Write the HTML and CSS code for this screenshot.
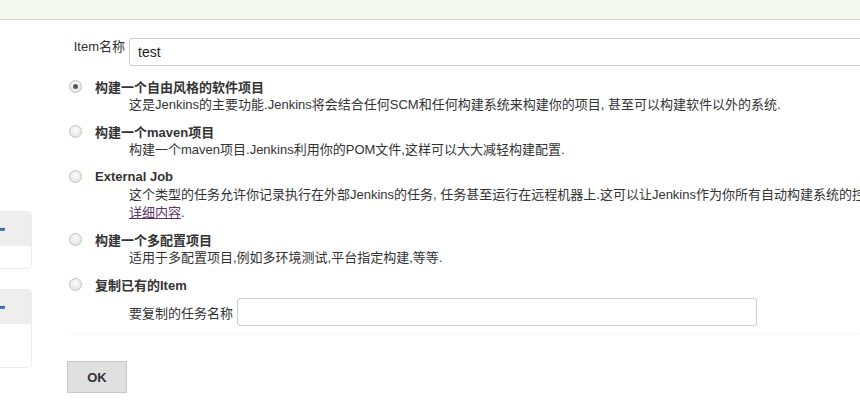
FILE: index.html
```html
<!DOCTYPE html>
<html lang="zh-CN">
<head>
    <meta charset="UTF-8">
    <meta name="viewport" content="width=device-width, initial-scale=1.0">
    <title>新建Item</title>
    <link rel="stylesheet" href="styles.css">
</head>
<body>
    <div class="topbar"></div>
    <div class="page">
        <div class="sidebar">
            <div class="side-panel first">
                <div class="side-head"><span class="side-icon"></span></div>
                <div class="side-body short"></div>
            </div>
            <div class="side-panel">
                <div class="side-head"><span class="side-icon"></span></div>
                <div class="side-body"></div>
            </div>
        </div>
        <form class="main" id="createItem">
            <div class="name-row">
                <label for="name">Item名称</label>
                <input type="text" id="name" name="name" value="test">
            </div>

            <div class="mode-list">
                <div class="mode">
                    <div class="mode-label"><span class="radio checked"></span>构建一个自由风格的软件项目</div>
                    <div class="mode-desc">这是Jenkins的主要功能.Jenkins将会结合任何SCM和任何构建系统来构建你的项目, 甚至可以构建软件以外的系统.</div>
                </div>
                <div class="mode">
                    <div class="mode-label"><span class="radio"></span>构建一个maven项目</div>
                    <div class="mode-desc">构建一个maven项目.Jenkins利用你的POM文件,这样可以大大减轻构建配置.</div>
                </div>
                <div class="mode">
                    <div class="mode-label"><span class="radio"></span>External Job</div>
                    <div class="mode-desc clip">这个类型的任务允许你记录执行在外部Jenkins的任务, 任务甚至运行在远程机器上.这可以让Jenkins作为你所有自动构建系统的控制面板.</div>
                    <div class="mode-desc"><a href="#">详细内容</a>.</div>
                </div>
                <div class="mode">
                    <div class="mode-label"><span class="radio"></span>构建一个多配置项目</div>
                    <div class="mode-desc">适用于多配置项目,例如多环境测试,平台指定构建,等等.</div>
                </div>
                <div class="mode">
                    <div class="mode-label"><span class="radio"></span>复制已有的Item</div>
                    <div class="copy-row">
                        <label for="from">要复制的任务名称</label>
                        <input type="text" id="from" name="from">
                    </div>
                </div>
            </div>

            <div class="bottom">
                <button type="submit">OK</button>
            </div>
        </form>
    </div>
</body>
</html>
```

FILE: styles.css
```css
body {
    margin: 0;
    font-family: "Liberation Sans", Arial, "Noto Sans CJK SC", sans-serif;
    font-size: 13px;
    color: #333;
    background: #fff;
    width: 860px;
    height: 410px;
    overflow: hidden;
}
.topbar {
    height: 19px;
    background-color: #f6f8f2;
    border-bottom: 1px solid #d3d3d3;
}
.page {
    display: flex;
}
.sidebar {
    width: 32px;
    flex-shrink: 0;
    padding-top: 191px;
}
.side-panel {
    border: 1px solid #ececec;
    border-left: none;
    border-radius: 0 5px 5px 0;
    overflow: hidden;
    margin-bottom: 20px;
}
.side-head {
    height: 34px;
    background-color: #eeeeee;
    position: relative;
}
.side-icon {
    position: absolute;
    left: 0;
    top: 16px;
    width: 5px;
    height: 2px;
    background-color: #4a7fc1;
    border-top: 1px solid #2f5f9e;
}
.side-body {
    height: 43px;
    background: #fff;
}
.side-body.short {
    height: 22px;
}
.main {
    margin-left: 35px;
    padding-top: 18px;
    flex: 1;
    min-width: 0;
    overflow: hidden;
}
.name-row {
    display: flex;
    align-items: flex-start;
}
.name-row label {
    flex-shrink: 0;
    width: 58px;
    padding: 1px 4px 0 0;
    text-align: right;
    white-space: nowrap;
    line-height: 16px;
}
input[type="text"] {
    height: 28px;
    box-sizing: border-box;
    border: 1px solid #cccccc;
    border-radius: 3px;
    padding: 2px 8px;
    font-family: "Liberation Sans", Arial, sans-serif;
    font-size: 14px;
    color: #222;
}
.name-row input {
    width: 760px;
    flex-shrink: 0;
}
.mode-list {
    margin-top: 10px;
}
.mode {
    margin-bottom: 7px;
}
.mode-label {
    display: flex;
    align-items: center;
    height: 20px;
    font-weight: bold;
    padding-left: 2px;
}
.radio {
    width: 11px;
    height: 11px;
    border: 1px solid #c2c2c2;
    border-radius: 50%;
    background: radial-gradient(circle at 50% 40%, #fdfdfd, #dcdcdc);
    margin-right: 13px;
    position: relative;
}
.radio.checked::after {
    content: "";
    position: absolute;
    left: 3px;
    top: 3px;
    width: 5px;
    height: 5px;
    border-radius: 50%;
    background: #555;
}
.mode-desc {
    padding-left: 62px;
    line-height: 18px;
}
.mode-desc.clip {
    white-space: nowrap;
    overflow: hidden;
}
.mode-desc a {
    color: #5c3566;
    text-decoration: underline;
}
.copy-row {
    display: flex;
    align-items: center;
    margin-top: 4px;
    padding-left: 62px;
}
.copy-row label {
    margin-right: 4px;
}
.copy-row input {
    width: 520px;
}
.bottom {
    margin-top: 3px;
    border-top: 1px dotted #f2f2f2;
    padding-top: 27px;
}
button {
    width: 60px;
    height: 32px;
    background-color: #e0e0e0;
    border: 1px solid #c8c8c8;
    color: #333;
    font-family: "Liberation Sans", Arial, sans-serif;
    font-size: 13px;
    font-weight: bold;
    cursor: pointer;
}
button:hover {
    background-color: #d6d6d6;
}
```
